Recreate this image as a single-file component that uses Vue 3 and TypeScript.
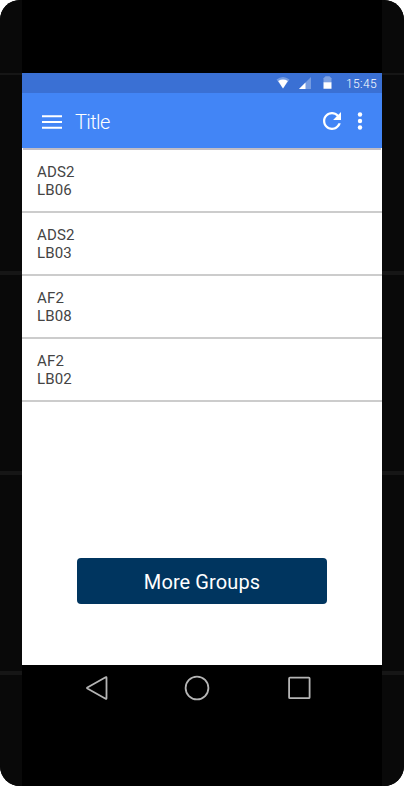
<script setup lang="ts">
interface Group {
  name: string
  room: string
}

const groups: Group[] = [
  { name: 'ADS2', room: 'LB06' },
  { name: 'ADS2', room: 'LB03' },
  { name: 'AF2', room: 'LB08' },
  { name: 'AF2', room: 'LB02' },
]
</script>

<template>
  <div class="phone">
    <div class="side"><i class="seam thin"></i><i class="seam"></i><i class="seam"></i><i class="seam"></i></div>
    <div class="center">
      <div class="forehead"></div>
      <main class="screen">
        <div class="status">
          <svg class="wifi" width="14" height="13" viewBox="0 0 14 13">
            <path d="M0.500 3.600Q7-1.700 13.500 3.600L7 12.400Z" fill="#fff" opacity="0.3" />
            <path d="M2.200 5Q7 2.200 11.800 5L7 12.400Z" fill="#fff" />
          </svg>
          <svg class="signal" width="12" height="12" viewBox="0 0 12 12">
            <path d="M0 12L12 0V12Z" fill="#fff" opacity="0.3" />
            <path d="M0 12L6.500 5.500V12Z" fill="#fff" />
          </svg>
          <svg class="battery" width="9" height="13" viewBox="0 0 9 13">
            <path d="M0.500 2.300L2.500 0.200H6.500L8.500 2.300V6.500H0.500Z" fill="#fff" opacity="0.35" />
            <path d="M0.500 6.300H8.500V12.700H0.500Z" fill="#fff" />
          </svg>
          <span class="time">15:45</span>
        </div>
        <header class="bar">
          <svg class="menu" width="20" height="14" viewBox="0 0 20 14" fill="#fff">
            <path d="M0 0.200H20V2.200H0ZM0 6H20V8H0ZM0 11.700H20V13.700H0Z" />
          </svg>
          <h1>Title</h1>
          <svg class="refresh" width="18" height="18" viewBox="4 4 16 16" fill="#fff">
            <path d="M17.650 6.350C16.200 4.900 14.210 4 12 4c-4.420 0-7.990 3.580-7.990 8s3.570 8 7.990 8c3.730 0 6.840-2.550 7.730-6h-2.080c-.82 2.330-3.040 4-5.650 4-3.310 0-6-2.690-6-6s2.690-6 6-6c1.660 0 3.140.69 4.220 1.780L13 11h7V4l-2.350 2.350z" />
          </svg>
          <svg class="more" width="6" height="18" viewBox="0 0 6 18" fill="#fff">
            <circle cx="3" cy="2.500" r="2.200" /><circle cx="3" cy="9" r="2.200" /><circle cx="3" cy="15.500" r="2.200" />
          </svg>
        </header>
        <div class="edge"></div>
        <ul class="list">
          <li v-for="(group, index) in groups" :key="index">
            <span>{{ group.name }}</span>
            <span>{{ group.room }}</span>
          </li>
        </ul>
        <button class="groups" type="button">More Groups</button>
      </main>
      <nav class="nav">
        <svg class="back" width="24" height="26" viewBox="0 0 24 26"><path d="M20.600 2.200Q21.500 1.700 21.500 2.700V23.300Q21.500 24.300 20.600 23.800L2.400 13.500Q1.600 13 2.400 12.500Z" /></svg>
        <svg class="home" width="26" height="26" viewBox="0 0 26 26"><circle cx="13" cy="13" r="11.400" /></svg>
        <svg class="recent" width="24" height="24" viewBox="0 0 24 24"><rect x="2.100" y="1.700" width="20.500" height="20.500" rx="0.800" /></svg>
      </nav>
    </div>
    <div class="side"><i class="seam thin"></i><i class="seam"></i><i class="seam"></i><i class="seam"></i></div>
  </div>
</template>

<style>
body {
  background: #fff;
  overflow: hidden;
}
</style>

<style scoped>
.phone {
  display: flex;
  width: 404px;
  height: 786px;
  overflow: hidden;
  border-radius: 20px;
  background: #000;
  font-family: Roboto, "Liberation Sans", sans-serif;
}
.side {
  width: 22px;
  height: 786px;
  display: flex;
  flex-direction: column;
  background: #090909;
}
.seam {
  height: 4px;
  margin-top: 196px;
  background: #161616;
}
.seam.thin {
  height: 2px;
  margin-top: 73px;
}
.center {
  width: 360px;
  display: flex;
  flex-direction: column;
}
.forehead {
  height: 73px;
}
.screen {
  height: 592px;
  display: flex;
  flex-direction: column;
  background: #fff;
}
.status {
  height: 20px;
  display: flex;
  align-items: center;
  justify-content: flex-end;
  box-sizing: border-box;
  padding-right: 5px;
  background: #3a70d4;
  color: #fff;
}
.status svg {
  margin-bottom: 1px;
}
.wifi {
  margin-right: 9px;
}
.signal {
  margin-right: 12px;
}
.battery {
  margin-right: 14px;
}
.time {
  width: 31px;
  font-size: 12px;
  line-height: 20px;
  font-weight: 300;
  letter-spacing: 0.35px;
  white-space: nowrap;
  padding-top: 2px;
}
.bar {
  height: 55px;
  display: flex;
  align-items: center;
  box-sizing: border-box;
  padding: 2px 19px 0 20px;
  background: #4285f6;
}
.menu {
  margin-top: 1px;
}
h1 {
  margin: 0 auto 0 13px;
  font-size: 20px;
  line-height: 24px;
  font-weight: 300;
  letter-spacing: -0.6px;
  color: #fff;
}
.refresh {
  margin: 0 16px 1px 0;
}
.more {
  margin-bottom: 1px;
}
.edge {
  height: 2px;
  margin: 0 1px;
  background: #c1bdc5;
}
.list {
  margin: 0;
  padding: 0;
  list-style: none;
}
.list li {
  height: 63px;
  display: flex;
  flex-direction: column;
  box-sizing: border-box;
  padding: 13px 15px 0;
  border-bottom: 2px solid #ccc;
  color: #444;
  font-size: 15px;
  line-height: 18px;
  letter-spacing: 0.15px;
}
.groups {
  width: 250px;
  height: 46px;
  margin: 156px auto 0;
  padding: 2px 0 0;
  border: 0;
  border-radius: 4px;
  background: #00355f;
  color: #fff;
  font: 400 20px/24px Roboto, "Liberation Sans", sans-serif;
  letter-spacing: 0.1px;
}
.nav {
  height: 45px;
  display: flex;
  align-items: center;
  box-sizing: border-box;
  padding-left: 63px;
}
.nav svg {
  fill: none;
  stroke: #b5b5b5;
  stroke-width: 1.8;
}
.home {
  margin: 0 77px 0 75px;
}
</style>
